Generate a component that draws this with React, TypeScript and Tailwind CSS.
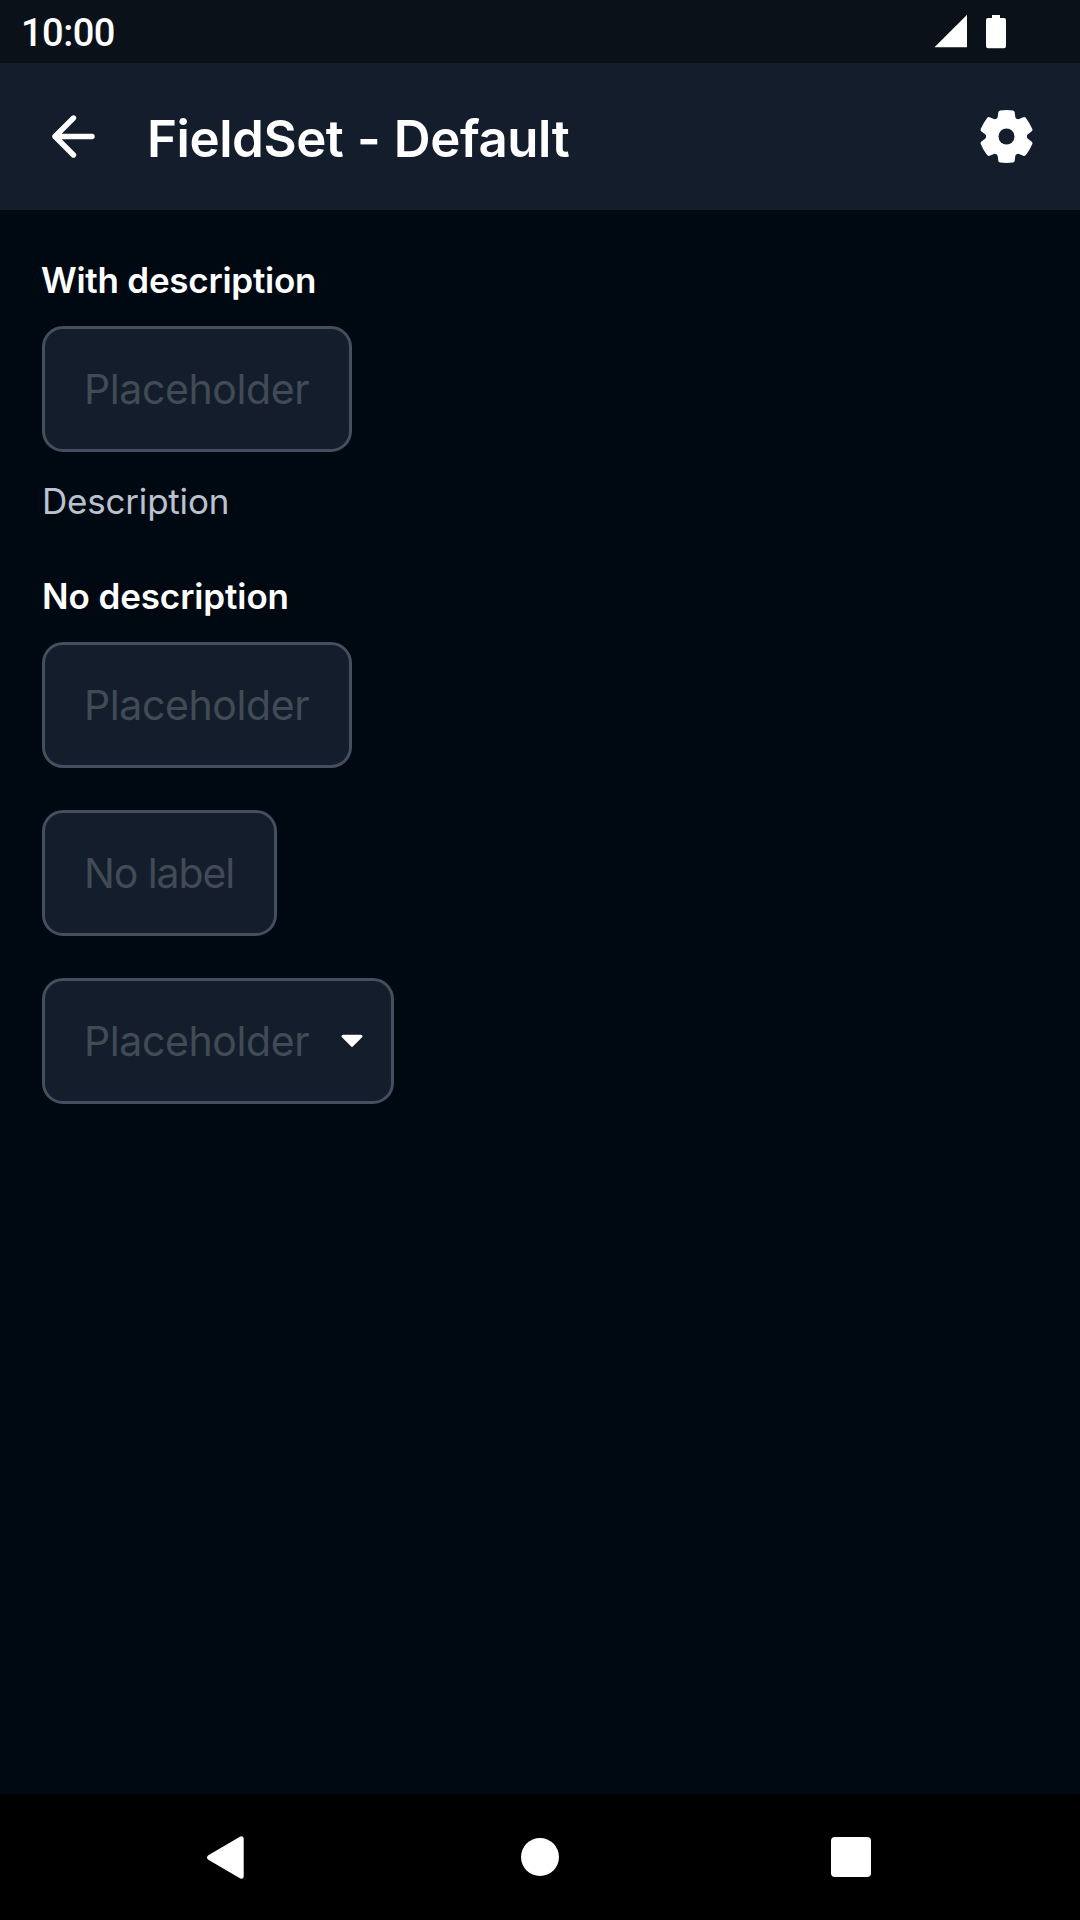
import React from "react";

const INK = "#ffffff";

function BackArrow() {
  return (
    <svg className="h-[63px] w-[63px]" viewBox="42 105 63 63" fill="none" stroke={INK} strokeWidth="5.4" strokeLinecap="round" strokeLinejoin="round">
      <path d="M73.5 118 55 136.5 73.5 155M55 136.5H92" />
    </svg>
  );
}

const TOOTH =
  "M-12.6 -16.2C-11 -17.2 -9.2 -17.6 -8.8 -19.6L-8.2 -24.2Q-8 -25.8 -6.4 -26.1Q0 -26.9 6.4 -26.1Q8 -25.8 8.2 -24.2L8.8 -19.6C9.2 -17.6 11 -17.2 12.6 -16.2L0 0Z";

function Gear() {
  return (
    <svg className="h-[63px] w-[63px]" viewBox="-31.5 -31.5 63 63">
      <g fill={INK}>
        {[0, 60, 120, 180, 240, 300].map((a) => (
          <path key={a} d={TOOTH} transform={`rotate(${a})`} />
        ))}
        <circle r="20" />
      </g>
      <circle r="8" fill="#141d2b" />
    </svg>
  );
}

function Field({ text, select = false, width, tracking = "tracking-[-0.4px]" }: { text: string; select?: boolean; width: string; tracking?: string }) {
  return (
    <div className={`flex h-[126px] items-center rounded-[21px] border-3 border-[#434e5e] bg-[#141d2b] pl-[39px] ${width}`}>
      <span className={`whitespace-nowrap text-[41px] leading-none text-[#414b55] ${tracking}`}>{text}</span>
      {select && (
        <svg className="ml-auto mr-[27px] mt-[2px] h-[16px] w-[24px]" viewBox="0 0 24 16">
          <path d="M3 2.2H21L12 11.3Z" fill={INK} stroke={INK} strokeWidth="3" strokeLinejoin="round" />
        </svg>
      )}
    </div>
  );
}

function Label({ children, className }: { children: string; className: string }) {
  return <div className={`mb-[18px] h-14 text-[35px] font-semibold leading-[56px] text-white ${className}`}>{children}</div>;
}

export default function App() {
  return (
    <div className="flex h-[1920px] w-[1080px] flex-col overflow-hidden bg-[#000811] font-['Inter',sans-serif]">
      <div className="flex h-[63px] items-center bg-[#0a1119] pl-[21px] pr-[74px]">
        <span className="pt-[3px] font-['Roboto',sans-serif] text-[38px] font-medium leading-none tracking-[-0.5px] text-white">10:00</span>
        <svg className="ml-auto h-[34px] w-[72px]" viewBox="934 14.5 72 34" fill={INK}>
          <path d="M934.5 46.8 967 14.3V46.8Z" />
          <path d="M992 14.5h8v3h4q2 0 2 2v26q0 2.2-2 2.2h-16q-2 0-2-2.2v-26q0-2 2-2h4Z" />
        </svg>
      </div>

      <header className="flex h-[147px] items-center bg-[#141d2b] px-[42px]">
        <BackArrow />
        <h1 className="ml-[42px] pt-1 text-[51px] font-semibold leading-none tracking-[-0.45px] text-white [word-spacing:1.2px]">FieldSet - Default</h1>
        <div className="ml-auto">
          <Gear />
        </div>
      </header>

      <main className="flex flex-1 flex-col gap-[42px] p-[42px]">
        <section>
          <Label className="-ml-px tracking-[-0.25px]">With description</Label>
          <Field text="Placeholder" width="w-[310px]" />
          <p className="mt-6 h-[50px] text-[35px] leading-[50px] tracking-[-0.2px] text-[#b9c2ce]">Description</p>
        </section>
        <section>
          <Label className="tracking-[-0.1px]">No description</Label>
          <Field text="Placeholder" width="w-[310px]" />
        </section>
        <Field text="No label" width="w-[235px]" tracking="tracking-[-1.1px]" />
        <Field text="Placeholder" width="w-[352px]" select />
      </main>

      <nav className="flex h-[126px] items-center bg-black pl-[206px] pr-[209px]">
        <svg className="h-[43px] w-[38px]" viewBox="0 0 38 43">
          <path d="M35.2 2.8V40.2L3.6 21.5Z" fill={INK} stroke={INK} strokeWidth="5" strokeLinejoin="round" />
        </svg>
        <span className="ml-[277px] h-[38px] w-[38px] rounded-full bg-white" />
        <span className="ml-auto h-10 w-10 rounded-[4px] bg-white" />
      </nav>
    </div>
  );
}
